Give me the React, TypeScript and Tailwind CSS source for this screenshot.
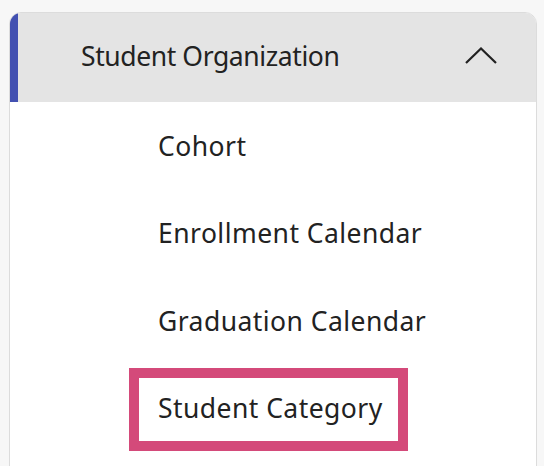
import React from 'react';

const items = ['Cohort', 'Enrollment Calendar', 'Graduation Calendar'];

export default function App() {
  return (
    <div
      className="min-h-screen w-[544px] h-[466px] overflow-hidden bg-[#f7f7f7] pt-[12px] pl-[9px] pr-[7px]"
      style={{ fontFamily: '"Noto Sans", "Open Sans", sans-serif' }}
    >
      <div className="h-[480px] bg-white border border-[#dcdcdc] rounded-t-[12px] overflow-hidden">
        {/* Header */}
        <div className="flex h-[89px] bg-[#e4e4e4]">
          <div className="w-[8px] bg-[#4250b1]" />
          <div className="flex flex-1 items-center justify-between pl-[63px] pr-[39px] pb-[2px]">
            <span className="text-[26.5px] text-[#222] tracking-[-0.4px]">Student Organization</span>
            <svg width="32" height="17" viewBox="0 0 32 17" fill="none" className="mb-[3px]">
              <polyline points="1,16 16,1.5 31,16" stroke="#222" strokeWidth="2.2" />
            </svg>
          </div>
        </div>

        {/* Items */}
        <div className="flex flex-col pt-[1px]">
          {items.map((item) => (
            <div key={item} className="flex h-[87.5px] items-center pl-[148px]">
              <span className="text-[26.5px] text-[#222] tracking-[0.45px]">{item}</span>
            </div>
          ))}
          <div className="flex h-[87.5px] items-center pl-[119px]">
            <div className="flex h-[83px] w-[279px] items-center border-[10px] border-[#d44a7a] pl-[19px]">
              <span className="text-[26.5px] text-[#222] tracking-[0.45px]">Student Category</span>
            </div>
          </div>
        </div>
      </div>
    </div>
  );
}
